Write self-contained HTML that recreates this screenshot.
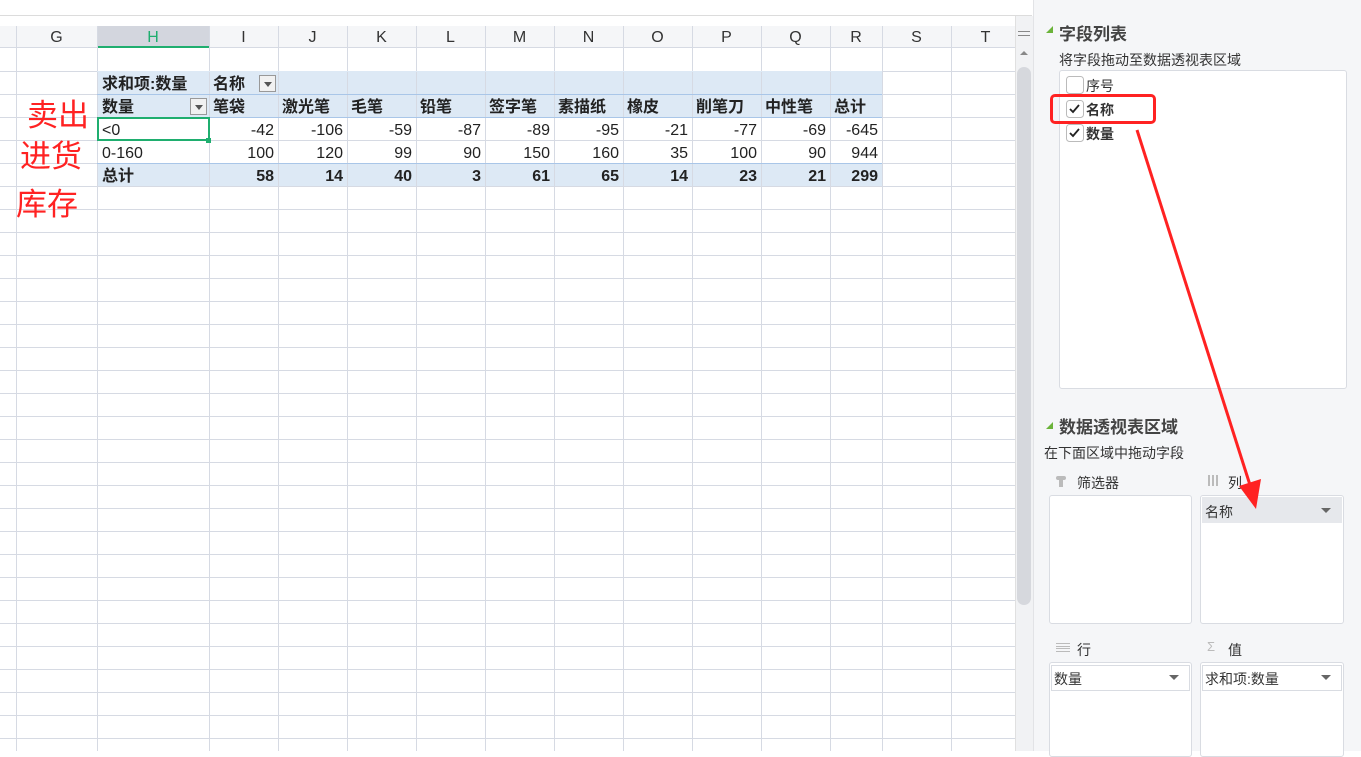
<!DOCTYPE html>
<html><head><meta charset="utf-8"><style>
*{margin:0;padding:0;box-sizing:border-box}
body{width:1361px;height:751px;overflow:hidden;background:#fff;position:relative;font-family:"Liberation Sans","Noto Sans CJK SC",sans-serif;color:#222}
.a{position:absolute}
.vl{position:absolute;top:26px;bottom:0;width:1px;background:#d6dae3}
.hl{position:absolute;left:0;width:1015px;height:1px;background:#d6dae3}
.ch{position:absolute;top:26px;height:22px;font-size:16px;color:#333;text-align:center;line-height:24px}
.t{position:absolute;font-size:16px;line-height:23px;white-space:nowrap}
.r{text-align:right}
.b{font-weight:bold}
.dd{position:absolute;width:17px;height:17px;border:1px solid #999;background:#f1f1f1}
.dd:after{content:"";position:absolute;left:4px;top:6px;border-left:4px solid transparent;border-right:4px solid transparent;border-top:5px solid #555}
.p{font-size:14px;color:#333}
.box{position:absolute;background:#fff;border:1px solid #d9dce2;border-radius:3px}
.tri{position:absolute;border-left:5px solid transparent;border-right:5px solid transparent;border-top:5px solid #666}
.cb{position:absolute;width:17px;height:17px;border:1px solid #bbb;border-radius:3px;background:#fff}
</style></head><body>
<div class="a" style="left:0;top:0;width:1032px;height:16px;background:#fff;border-bottom:1px solid #dcdcdc"></div>
<div class="a" style="left:0;top:26px;width:1015px;height:22px;background:#f5f6f8;border-bottom:1px solid #d6dae3"></div>
<div class="a" style="left:97px;top:26px;width:112px;height:22px;background:#d3d6de;border-bottom:2px solid #1fae6f"></div>
<div class="ch" style="left:16px;width:81px">G</div>
<div class="ch" style="left:97px;width:112px;color:#1fae6f">H</div>
<div class="ch" style="left:209px;width:69px">I</div>
<div class="ch" style="left:278px;width:69px">J</div>
<div class="ch" style="left:347px;width:69px">K</div>
<div class="ch" style="left:416px;width:69px">L</div>
<div class="ch" style="left:485px;width:69px">M</div>
<div class="ch" style="left:554px;width:69px">N</div>
<div class="ch" style="left:623px;width:69px">O</div>
<div class="ch" style="left:692px;width:69px">P</div>
<div class="ch" style="left:761px;width:69px">Q</div>
<div class="ch" style="left:830px;width:52px">R</div>
<div class="ch" style="left:882px;width:69px">S</div>
<div class="ch" style="left:951px;width:69px">T</div>
<div class="a" style="left:97px;top:72px;width:785px;height:46px;background:#dde9f5"></div>
<div class="a" style="left:97px;top:164px;width:785px;height:23px;background:#dde9f5"></div>
<div class="vl" style="left:16px"></div><div class="vl" style="left:97px"></div><div class="vl" style="left:209px"></div><div class="vl" style="left:278px"></div><div class="vl" style="left:347px"></div><div class="vl" style="left:416px"></div><div class="vl" style="left:485px"></div><div class="vl" style="left:554px"></div><div class="vl" style="left:623px"></div><div class="vl" style="left:692px"></div><div class="vl" style="left:761px"></div><div class="vl" style="left:830px"></div><div class="vl" style="left:882px"></div><div class="vl" style="left:951px"></div>
<div id="hls"></div>
<script>
var s="";for(var y=71;y<751;y+=23){s+='<div class="hl" style="top:'+y+'px"></div>';}document.getElementById('hls').innerHTML=s;
</script>
<div class="a" style="left:97px;top:94px;width:785px;height:1px;background:#a9c6e8"></div>
<div class="a" style="left:97px;top:117px;width:785px;height:1px;background:#a9c6e8"></div>
<div class="a" style="left:97px;top:163px;width:785px;height:1px;background:#a9c6e8"></div>
<div class="a" style="left:97px;top:71px;width:785px;height:1px;background:#dde9f5"></div>
<div class="a" style="left:97px;top:117px;width:113px;height:24px;border:2px solid #1fae6f"></div>
<div class="a" style="left:206px;top:138px;width:5px;height:5px;background:#1fae6f"></div>
<div class="t b" style="left:102px;top:73px">求和项:数量</div>
<div class="t b" style="left:213px;top:73px">名称</div>
<div class="dd" style="left:259px;top:75px"></div>
<div class="t b" style="left:102px;top:96px">数量</div>
<div class="dd" style="left:190px;top:98px"></div>
<div class="t b" style="left:213px;top:96px">笔袋</div>
<div class="t b" style="left:282px;top:96px">激光笔</div>
<div class="t b" style="left:351px;top:96px">毛笔</div>
<div class="t b" style="left:420px;top:96px">铅笔</div>
<div class="t b" style="left:489px;top:96px">签字笔</div>
<div class="t b" style="left:558px;top:96px">素描纸</div>
<div class="t b" style="left:627px;top:96px">橡皮</div>
<div class="t b" style="left:696px;top:96px">削笔刀</div>
<div class="t b" style="left:765px;top:96px">中性笔</div>
<div class="t b" style="left:834px;top:96px">总计</div>
<div class="t" style="left:102px;top:119px">&lt;0</div>
<div class="t" style="left:102px;top:142px">0-160</div>
<div class="t b" style="left:102px;top:165px">总计</div>
<div id="nums"></div>
<script>
var xs=[209,278,347,416,485,554,623,692,761,830],ws=[69,69,69,69,69,69,69,69,69,52];
var r1=["-42","-106","-59","-87","-89","-95","-21","-77","-69","-645"],r2=["100","120","99","90","150","160","35","100","90","944"],r3=["58","14","40","3","61","65","14","23","21","299"];
var h="";for(var i=0;i<10;i++){var L=xs[i],W=ws[i]-4;
h+='<div class="t r" style="left:'+L+'px;width:'+W+'px;top:119px">'+r1[i]+'</div>';
h+='<div class="t r" style="left:'+L+'px;width:'+W+'px;top:142px">'+r2[i]+'</div>';
h+='<div class="t r b" style="left:'+L+'px;width:'+W+'px;top:165px">'+r3[i]+'</div>';}
document.getElementById('nums').innerHTML=h;
</script>
<div class="a" style="left:27px;top:98px;font-size:31px;color:#f22;line-height:36px">卖出</div>
<div class="a" style="left:20px;top:139px;font-size:31px;color:#f22;line-height:36px">进货</div>
<div class="a" style="left:16px;top:187px;font-size:31px;color:#f22;line-height:36px">库存</div>
<div class="a" style="left:1015px;top:16px;width:18px;height:735px;background:#f1f2f4;border-left:1px solid #e0e0e0"></div>
<div class="a" style="left:1018px;top:31px;width:12px;height:5px;border-top:1px solid #888;border-bottom:1px solid #888"></div>
<div class="a" style="left:1020px;top:51px;border-left:4px solid transparent;border-right:4px solid transparent;border-bottom:4px solid #888"></div>
<div class="a" style="left:1017px;top:67px;width:14px;height:538px;background:#d6d8dd;border-radius:7px"></div>
<div class="a" style="left:1033px;top:0;width:328px;height:751px;background:#f5f6f8;border-left:1px solid #e2e3e6"></div>
<div class="a" style="left:1046px;top:26px;border-left:7px solid transparent;border-bottom:7px solid #6bb33a"></div>
<div class="a b" style="left:1059px;top:20px;font-size:17px;color:#444">字段列表</div>
<div class="a p" style="left:1059px;top:50px">将字段拖动至数据透视表区域</div>
<div class="box" style="left:1059px;top:70px;width:288px;height:319px"></div>
<svg class="a" style="left:0;top:0" width="1361" height="751">
<rect x="1066.5" y="76.5" width="17" height="17" rx="3" fill="#fff" stroke="#bbb"/>
<rect x="1066.5" y="100.5" width="17" height="17" rx="3" fill="#fff" stroke="#bbb"/>
<rect x="1066.5" y="124.5" width="17" height="17" rx="3" fill="#fff" stroke="#bbb"/>
<path d="M1070 109 l3 3 l6 -7" fill="none" stroke="#222" stroke-width="1.8"/>
<path d="M1070 133 l3 3 l6 -7" fill="none" stroke="#222" stroke-width="1.8"/>
</svg>
<div class="a p" style="left:1086px;top:76px">序号</div>
<div class="a p b" style="left:1086px;top:100px">名称</div>
<div class="a p b" style="left:1086px;top:124px">数量</div>
<div class="a" style="left:1050px;top:94px;width:106px;height:30px;border:3px solid #f22;border-radius:5px"></div>
<div class="a" style="left:1046px;top:422px;border-left:7px solid transparent;border-bottom:7px solid #6bb33a"></div>
<div class="a b" style="left:1059px;top:413px;font-size:17px;color:#444">数据透视表区域</div>
<div class="a p" style="left:1044px;top:443px">在下面区域中拖动字段</div>
<div class="a" style="left:1056px;top:476px;width:10px;height:4px;background:#bbb;border-radius:2px"></div>
<div class="a" style="left:1059px;top:479px;width:4px;height:8px;background:#bbb"></div>
<div class="a p" style="left:1077px;top:473px">筛选器</div>
<div class="a" style="left:1208px;top:475px;width:10px;height:11px;border-left:2px solid #bbb;border-right:2px solid #bbb"></div>
<div class="a" style="left:1212px;top:475px;width:2px;height:11px;background:#bbb"></div>
<div class="a p" style="left:1228px;top:473px">列</div>
<div class="box" style="left:1049px;top:495px;width:143px;height:129px"></div>
<div class="box" style="left:1200px;top:495px;width:144px;height:129px"></div>
<div class="a" style="left:1202px;top:497px;width:140px;height:26px;background:#e6e8ec"></div>
<div class="a p" style="left:1205px;top:502px">名称</div>
<div class="tri" style="left:1321px;top:508px"></div>
<div class="a" style="left:1056px;top:643px;width:14px;height:9px;border-top:1px solid #bbb;border-bottom:1px solid #bbb"></div>
<div class="a" style="left:1056px;top:646px;width:14px;height:3px;border-top:1px solid #bbb;border-bottom:1px solid #bbb"></div>
<div class="a p" style="left:1077px;top:640px">行</div>
<div class="a" style="left:1207px;top:639px;font-size:13px;color:#bbb">Σ</div>
<div class="a p" style="left:1228px;top:640px">值</div>
<div class="box" style="left:1049px;top:662px;width:143px;height:95px"></div>
<div class="box" style="left:1200px;top:662px;width:144px;height:95px"></div>
<div class="a" style="left:1051px;top:665px;width:139px;height:26px;border:1px solid #d9dce2;background:#fff"></div>
<div class="a p" style="left:1054px;top:669px">数量</div>
<div class="tri" style="left:1169px;top:675px"></div>
<div class="a" style="left:1202px;top:665px;width:140px;height:26px;border:1px solid #d9dce2;background:#fff"></div>
<div class="a p" style="left:1205px;top:669px">求和项:数量</div>
<div class="tri" style="left:1321px;top:675px"></div>
<svg class="a" style="left:0;top:0" width="1361" height="751">
<line x1="1137" y1="130" x2="1250" y2="485" stroke="#f22" stroke-width="3"/>
<polygon points="1256,509 1239,486 1261,479" fill="#f22"/>
</svg>
</body></html>
